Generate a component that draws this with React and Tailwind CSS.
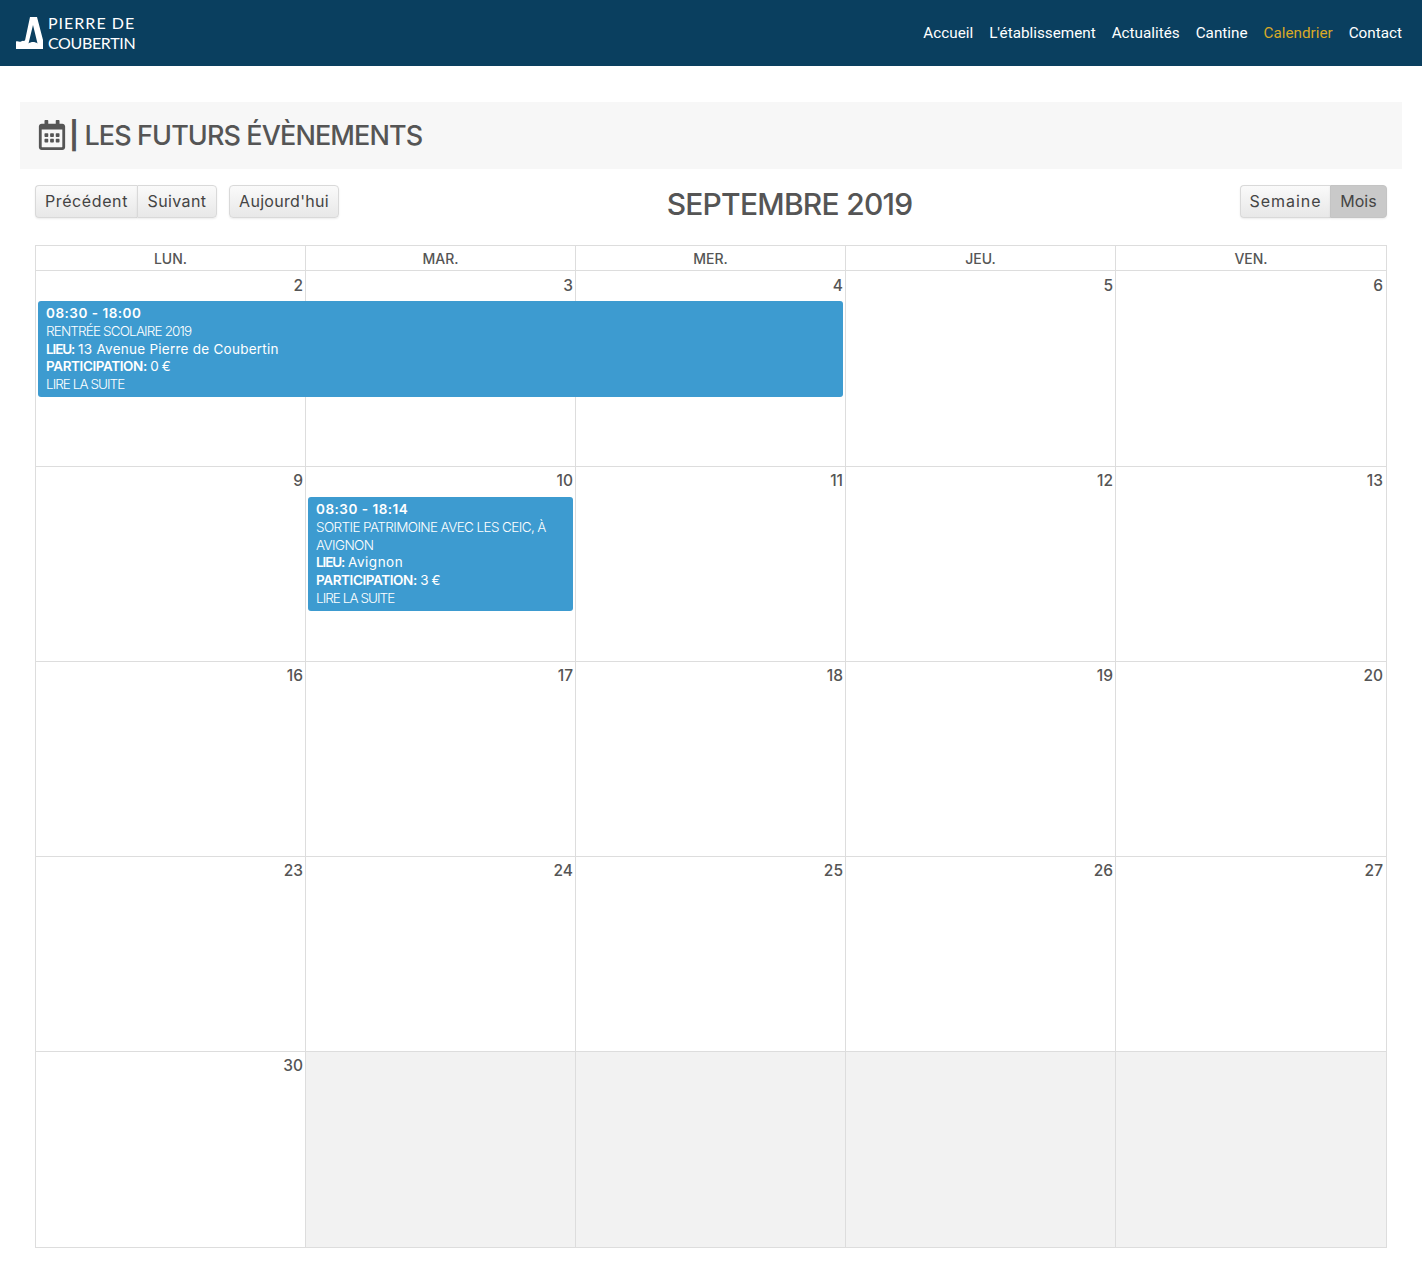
import { FaRegCalendarAlt } from "react-icons/fa";

const navLinks = ["Accueil", "L'établissement", "Actualités", "Cantine", "Calendrier", "Contact"];
const colStart = ["col-start-1", "col-start-2", "col-start-3", "col-start-4", "col-start-5"];

const weeks = [
  { days: [2, 3, 4, 5, 6], h: "h-[196px]" },
  { days: [9, 10, 11, 12, 13], h: "h-[195px]" },
  { days: [16, 17, 18, 19, 20], h: "h-[195px]" },
  { days: [23, 24, 25, 26, 27], h: "h-[195px]" },
  { days: [30, null, null, null, null], h: "h-[195px]" },
];

function Logo() {
  return (
    <div className="flex items-center">
      <svg width="28" height="34" viewBox="0 0 28 34">
        <path
          fill="#fff"
          fillRule="evenodd"
          d="M14 1H21L27 24V33H0V25.500C2 24.500 3 26.500 5 25.500C6.500 24.800 8 25 9 24.500L14 1ZM17 9L12.500 27.500C15 25.500 19 25.500 21.500 27.500Z"
        />
      </svg>
      <div className="ml-[4px] font-['Lato',sans-serif] text-[16px] leading-[20px] font-normal text-white">
        <div className="tracking-[1px]">PIERRE DE</div>
        <div className="tracking-[-0.35px]">COUBERTIN</div>
      </div>
    </div>
  );
}

function Btn({ children, active, className = "" }) {
  const bg = active
    ? "border-[#c4c4c4] bg-[#c9c9c9]"
    : "border-[#d9d9d9] bg-gradient-to-b from-[#fafafa] to-[#e8e8e8]";
  return (
    <button
      className={`h-[33px] border pb-[2px] text-center text-[16px] text-[#444] shadow-[0_1px_2px_rgba(0,0,0,0.08)] ${bg} ${className}`}
    >
      {children}
    </button>
  );
}

function EventCard({ time, title, titleTracking, place, placeTracking, price, className = "" }) {
  return (
    <div className={`mr-[3px] ml-[2px] rounded-[3px] bg-[#3d9bd0] px-2 pt-[4px] pb-[3px] text-[13.5px] leading-[17.8px] text-white ${className}`}>
      <div className="font-semibold tracking-[0.5px]">{time}</div>
      <div className={`font-light ${titleTracking}`}>{title}</div>
      <div>
        <span className="font-semibold tracking-[-1.1px]">LIEU:</span>{" "}
        <span className={placeTracking}>{place}</span>
      </div>
      <div className="tracking-[-0.4px]">
        <span className="font-semibold">PARTICIPATION:</span> {price}
      </div>
      <div className="font-light tracking-[-0.95px]">LIRE LA SUITE</div>
    </div>
  );
}

export default function App() {
  return (
    <div className="min-h-[1268px] bg-white font-['Inter',sans-serif] text-[#555]">
      {/* Navbar */}
      <nav className="flex h-[66px] items-center justify-between bg-[#0a3f5f] pr-[20px] pl-[16px]">
        <Logo />
        <ul className="flex gap-4 font-['Roboto',sans-serif] text-[15.25px] text-white">
          {navLinks.map((link) => (
            <li key={link} className={link === "Calendrier" ? "text-[#d9a927]" : ""}>
              {link}
            </li>
          ))}
        </ul>
      </nav>

      {/* Title */}
      <div className="mx-[20px] mt-[36px] flex h-[67px] items-center gap-[2px] bg-[#f7f7f7] pl-[17px] text-[27px] font-medium tracking-[-0.9px] text-[#555]">
        <FaRegCalendarAlt size={30} className="mb-[2px]" />
        <h1 className="pt-[1px]"><span className="font-bold">|</span> LES FUTURS ÉVÈNEMENTS</h1>
      </div>

      {/* Toolbar */}
      <div className="mx-[35px] mt-[16px] grid grid-cols-[1fr_auto_1fr] items-start">
        <div className="flex">
          <Btn className="w-[102px] rounded-l-[4px] border-r-0 tracking-[0.6px]">Précédent</Btn>
          <Btn className="w-[80px] rounded-r-[4px] tracking-[0.4px]">Suivant</Btn>
          <Btn className="ml-[12px] w-[110px] rounded-[4px] tracking-[0.3px]">Aujourd'hui</Btn>
        </div>
        <h2 className="pl-[157px] text-[30px] leading-[38px] font-medium tracking-[-0.75px] text-[#555]">SEPTEMBRE 2019</h2>
        <div className="flex justify-end">
          <Btn className="w-[90px] rounded-l-[4px] border-r-0 tracking-[1px]">Semaine</Btn>
          <Btn active className="w-[57px] rounded-r-[4px]">Mois</Btn>
        </div>
      </div>

      {/* Calendar */}
      <div className="mx-[35px] mt-[22px] w-[1352px] border border-[#ddd]">
        <div className="grid h-[25px] grid-cols-[270px_270px_270px_270px_1fr] border-b border-[#ddd] text-center text-[14px] leading-[25px] font-medium">
          {["LUN.", "MAR.", "MER.", "JEU.", "VEN."].map((d, i) => (
            <div key={d} className={i < 4 ? "border-r border-[#ddd]" : ""}>{d}</div>
          ))}
        </div>
        {weeks.map((week, w) => (
          <div
            key={w}
            className={`grid grid-cols-[270px_270px_270px_270px_1fr] grid-rows-[30px_1fr] ${week.h} ${w < 4 ? "border-b border-[#ddd]" : ""}`}
          >
            {week.days.map((d, i) => (
              <div
                key={i}
                className={`${colStart[i]} row-start-1 row-span-2 ${i < 4 ? "border-r border-[#ddd]" : ""} ${d === null ? "bg-[#f2f2f2]" : ""}`}
              />
            ))}
            {week.days.map((d, i) => (
              <div
                key={i}
                className={`${colStart[i]} row-start-1 pr-[3px] text-right text-[15.5px] leading-[20px] font-medium ${w === 0 ? "pt-[5px]" : "pt-[4px]"}`}
              >
                {d}
              </div>
            ))}
            {w === 0 && (
              <EventCard
                className="col-start-1 col-span-3 row-start-2 self-start"
                time="08:30 - 18:00"
                title="RENTRÉE SCOLAIRE 2019"
                titleTracking="tracking-[-0.85px]"
                place="13 Avenue Pierre de Coubertin"
                placeTracking="tracking-[0.25px]"
                price="0 €"
              />
            )}
            {w === 1 && (
              <EventCard
                className="col-start-2 row-start-2 self-start"
                time="08:30 - 18:14"
                title="SORTIE PATRIMOINE AVEC LES CEIC, À AVIGNON"
                titleTracking="tracking-[-0.6px]"
                place="Avignon"
                placeTracking="tracking-[0.5px]"
                price="3 €"
              />
            )}
          </div>
        ))}
      </div>
    </div>
  );
}
